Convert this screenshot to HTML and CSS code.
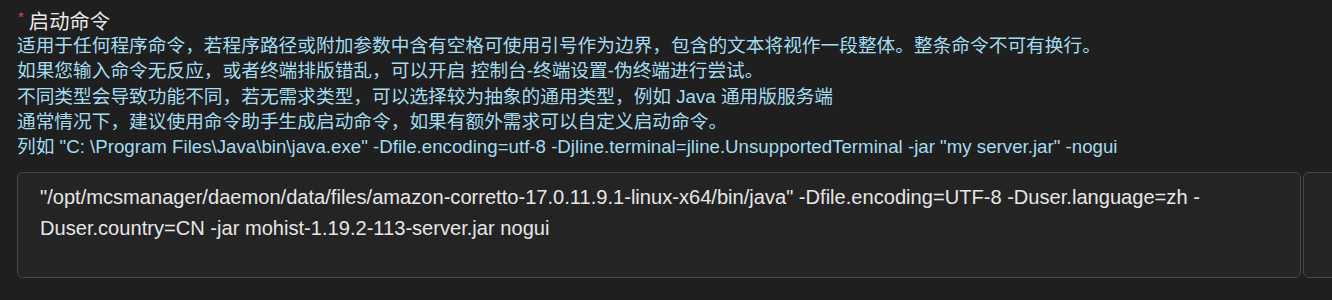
FILE: index.html
```html
<!DOCTYPE html>
<html lang="zh-CN">
<head>
<meta charset="utf-8">
<title>启动命令</title>
<link rel="stylesheet" href="styles.css">
</head>
<body>
<div class="form">
  <div class="item">
    <div class="label"><span class="req">*</span><span class="label-text">启动命令</span></div>
    <div class="desc">
      <div>适用于任何程序命令，若程序路径或附加参数中含有空格可使用引号作为边界，包含的文本将视作一段整体。整条命令不可有换行。</div>
      <div>如果您输入命令无反应，或者终端排版错乱，可以开启 控制台-终端设置-伪终端进行尝试。</div>
      <div>不同类型会导致功能不同，若无需求类型，可以选择较为抽象的通用类型，例如 Java 通用版服务端</div>
      <div>通常情况下，建议使用命令助手生成启动命令，如果有额外需求可以自定义启动命令。</div>
      <div>列如 "C: \Program Files\Java\bin\java.exe" -Dfile.encoding=utf-8 -Djline.terminal=jline.UnsupportedTerminal -jar "my server.jar" -nogui</div>
    </div>
    <div class="input-group">
      <div class="textarea">"/opt/mcsmanager/daemon/data/files/amazon-corretto-17.0.11.9.1-linux-x64/bin/java" -Dfile.encoding=UTF-8 -Duser.language=zh -Duser.country=CN -jar mohist-1.19.2-113-server.jar nogui</div>
      <div class="addon"><span class="addon-mark"></span></div>
    </div>
  </div>
  <div class="item">
    <div class="label"><span class="req">*</span><span class="label-text">工作目录</span></div>
  </div>
</div>
</body>
</html>
```
FILE: styles.css
```css
html, body {
  margin: 0;
  padding: 0;
  background: #1f1f1f;
  overflow: hidden;
  width: 1332px;
  height: 300px;
}
.form {
  padding: 7px 0 0 17px;
  font-family: "Liberation Sans", "Noto Sans CJK SC", sans-serif;
}
.item {
  margin-bottom: 19px;
}
.label {
  display: flex;
  align-items: center;
  height: 26px;
  color: #e8e8e8;
}
.req {
  color: #dc4446;
  font-size: 15px;
  margin-right: 5px;
  margin-left: 1px;
  position: relative;
  top: -4px;
}
.label-text {
  font-size: 20.3px;
  font-family: "Noto Sans CJK SC", sans-serif;
}
.desc {
  color: #a3dcf0;
  font-size: 18.7px;
  line-height: 25.3px;
}
.input-group {
  display: flex;
  margin-top: 13px;
  gap: 2px;
}
.textarea {
  flex: 0 0 auto;
  width: 1238px;
  height: 78px;
  padding: 9px 22px 17px 22px;
  border: 1px solid #474747;
  border-radius: 6px;
  background: #242424;
  color: #e6e6e6;
  font-size: 20.1px;
  line-height: 31px;
}
.addon {
  flex: 0 0 auto;
  width: 120px;
  border: 1px solid #474747;
  border-radius: 6px;
  background: #242424;
  display: flex;
  align-items: center;
  padding-left: 28px;
}
.addon-mark {
  width: 4px;
  height: 2px;
  background: #bdbdbd;
  margin-top: -8px;
}
```
